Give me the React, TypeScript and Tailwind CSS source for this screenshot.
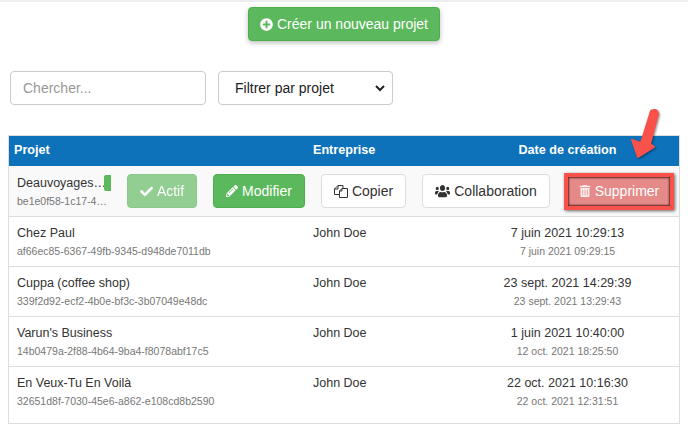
import { FaCheck, FaPencilAlt, FaPlusCircle, FaTrashAlt, FaUsers } from "react-icons/fa";

const ROWS = [
  { name: "Chez Paul", id: "af66ec85-6367-49fb-9345-d948de7011db", date: "7 juin 2021 10:29:13", sub: "7 juin 2021 09:29:15" },
  { name: "Cuppa (coffee shop)", id: "339f2d92-ecf2-4b0e-bf3c-3b07049e48dc", date: "23 sept. 2021 14:29:39", sub: "23 sept. 2021 13:29:43" },
  { name: "Varun's Business", id: "14b0479a-2f88-4b64-9ba4-f8078abf17c5", date: "1 juin 2021 10:40:00", sub: "12 oct. 2021 18:25:50" },
  { name: "En Veux-Tu En Voilà", id: "32651d8f-7030-45e6-a862-e108cd8b2590", date: "22 oct. 2021 10:16:30", sub: "22 oct. 2021 12:31:51" },
];

function Row({ row, last }: { row: (typeof ROWS)[number]; last?: boolean }) {
  return (
    <div className={`grid grid-cols-[296px_1fr_223px] border-t border-[#ddd] pl-2 pt-[6px] ${last ? "h-[58px]" : "h-[50px]"}`}>
      <div>
        <div className="text-[12.5px] leading-[20px] text-[#333]">{row.name}</div>
        <div className="text-[10.5px] leading-[16px] text-[#777]">{row.id}</div>
      </div>
      <div className="text-[12.5px] leading-[20px] text-[#333]">John Doe</div>
      <div className="text-center">
        <div className="text-[12.5px] leading-[20px] text-[#333]">{row.date}</div>
        <div className="text-[10.5px] leading-[16px] text-[#777]">{row.sub}</div>
      </div>
    </div>
  );
}

// fa-files-o style, the lucide and fa5 copy icons have no folded corners
function FilesIcon() {
  return (
    <svg viewBox="0 0 14 13" className="h-[13px] w-[14px]" fill="none" stroke="#333" strokeWidth="1">
      <path d="M5 9.5H.5V4L4 .5h5V3" />
      <path d="M4 .5V4H.5" />
      <path d="M8 3.5h5.5v9h-8V6z" />
      <path d="M8 3.5V6H5.5" />
    </svg>
  );
}

export default function App() {
  return (
    <div className="relative h-[430px] w-[688px] overflow-hidden bg-white font-['Liberation_Sans',Arial,sans-serif]">
      <div className="h-[2px] bg-[#eeeeee]" />

      <div className="mt-[5px] flex justify-center">
        <button className="flex h-[34px] w-[192px] items-center justify-center gap-[4px] rounded-[4px] border border-[#4cae4c] bg-[#5cb85c] text-[14px] text-white shadow-[0_2px_5px_rgba(0,0,0,0.25)]">
          <FaPlusCircle className="size-[13px]" />
          Créer un nouveau projet
        </button>
      </div>

      <div className="mt-[30px] flex gap-[12px] pl-[10px]">
        <input
          placeholder="Chercher..."
          className="h-[34px] w-[196px] rounded-[4px] border border-[#ccc] px-[12px] text-[14px] text-[#555] placeholder:text-[#999]"
        />
        <div className="flex h-[34px] w-[175px] items-center justify-between rounded-[4px] border border-[#ccc] pl-[16px] pr-[7px] text-[14px] text-[#222]">
          Filtrer par projet
          <svg viewBox="0 0 10 7" className="h-[7px] w-[10px]" fill="none" stroke="#222" strokeWidth="2">
            <path d="M1 1l4 4 4-4" />
          </svg>
        </div>
      </div>

      <div className="ml-[8px] mt-[30px] h-[289px] w-[672px] border border-[#ddd]">
        <div className="grid h-[30px] grid-cols-[299px_1fr_223px] items-center bg-[#0e72bb] pb-[2px] pl-[5px] text-[12.6px] font-bold text-white">
          <div>Projet</div>
          <div>Entreprise</div>
          <div className="text-center">Date de création</div>
        </div>

        <div className="flex h-[50px] items-center bg-[#f9f9f9] pl-2">
          <div className="w-[94px]">
            <div className="flex items-center">
              <span className="w-[87px] whitespace-nowrap text-[12.5px] leading-[20px] text-[#333]">Deauvoyages…</span>
              <span className="h-[16px] w-[7px] rounded-l-[2px] bg-[#5cb85c]" />
            </div>
            <div className="w-[92px] whitespace-nowrap text-[10.5px] leading-[16px] text-[#777]">be1e0f58-1c17-4…</div>
          </div>
          <button className="ml-[16px] flex h-[34px] w-[70px] items-center justify-center gap-[4px] rounded-[4px] border border-[#4cae4c] bg-[#5cb85c] text-[14px] text-white opacity-65">
            <FaCheck className="size-[13px]" />
            Actif
          </button>
          <button className="ml-[16px] flex h-[34px] w-[92px] items-center justify-center gap-[4px] rounded-[4px] border border-[#4cae4c] bg-[#5cb85c] text-[14px] text-white">
            <FaPencilAlt className="size-[12px]" />
            Modifier
          </button>
          <button className="ml-[16px] flex h-[34px] w-[85px] items-center justify-center gap-[4px] rounded-[4px] border border-[#ddd] bg-white text-[14px] text-[#333]">
            <FilesIcon />
            Copier
          </button>
          <button className="ml-[16px] flex h-[34px] w-[128px] items-center justify-center gap-[4px] rounded-[4px] border border-[#ddd] bg-white text-[14px] text-[#333]">
            <FaUsers className="h-[14px] w-[15px]" preserveAspectRatio="none" />
            Collaboration
          </button>
          <div className="ml-[14px] h-[37px] w-[110px] border-[4px] border-[#f9524a] shadow-[1px_1px_3px_rgba(0,0,0,0.6)]">
            <button className="flex h-full w-full items-center justify-center gap-[4px] bg-[#e58a88] text-[14px] text-white shadow-[inset_0_0_2px_1px_rgba(50,0,0,0.75)]">
              <FaTrashAlt className="size-[12px] opacity-85" />
              Supprimer
            </button>
          </div>
        </div>

        {ROWS.map((row, i) => (
          <Row key={row.id} row={row} last={i === ROWS.length - 1} />
        ))}
      </div>

      {/* annotation arrow */}
      <svg viewBox="0 0 688 430" className="pointer-events-none absolute inset-0 h-[430px] w-[688px]">
        <path
          d="M651 111 Q657 108 658 114 L650 144 L654 147 L638 157 L632 140 L641 143 Z"
          fill="#f9524a"
          stroke="#f9524a"
          strokeWidth="2"
          strokeLinejoin="round"
          style={{ filter: "drop-shadow(1px 1px 1px rgba(0,0,0,0.45))" }}
        />
      </svg>
    </div>
  );
}
